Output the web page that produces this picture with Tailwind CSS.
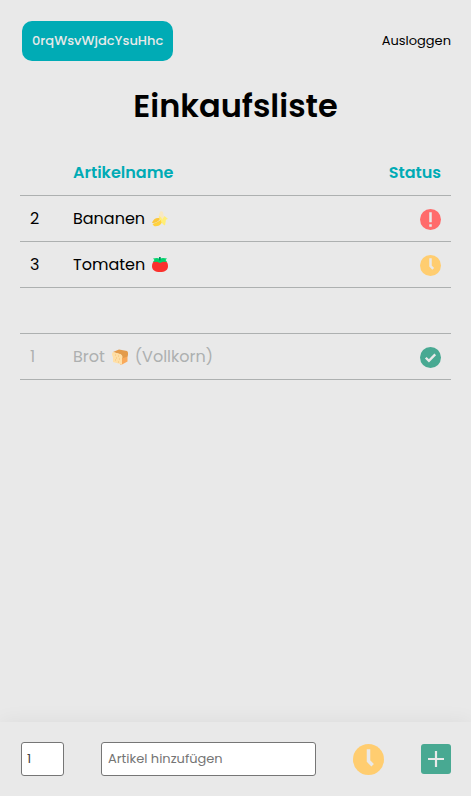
<!DOCTYPE html>
<html lang="de">

<head>
    <meta charset="UTF-8">
    <meta name="viewport" content="width=device-width, initial-scale=1.0">
    <script src="https://cdn.jsdelivr.net/npm/@tailwindcss/browser@4"></script>
    <title>Einkaufsliste</title>
</head>

<body class="min-h-screen flex flex-col bg-[#e9e9e9] text-black font-[Poppins,Inter,sans-serif]">
    <header class="flex items-center justify-between px-5 pt-[21px]">
        <button type="button" class="h-10 px-[10px] ml-[2px] rounded-[10px] bg-[#00abb5] text-[#e9e9e9] text-[13px] font-medium">0rqWsvWjdcYsuHhc</button>
        <a href="#" class="text-[13px]">Ausloggen</a>
    </header>

    <main class="flex-1 px-5">
        <h1 class="mt-5 text-center text-[32px] leading-[50px] font-semibold">Einkaufsliste</h1>

        <table class="w-full mt-[18px] border-collapse text-[16px]">
            <thead>
                <tr class="h-[46px] border-b border-[#adb0b0] text-[#00abb5]">
                    <th class="w-[43px]"></th>
                    <th class="px-[10px] pt-[2px] text-left font-semibold">Artikelname</th>
                    <th class="px-[10px] pt-[2px] text-right font-semibold">Status</th>
                </tr>
            </thead>
            <tbody>
                <tr class="h-[46px] border-b border-[#adb0b0]">
                    <td class="px-[10px] pt-[2px]">2</td>
                    <td class="px-[10px] pt-[2px]">
                        <div class="flex items-center gap-[7px]">
                            Bananen
                            <svg class="w-4 h-4" viewBox="0 0 16 16" role="img" aria-label="Banane">
                                <path d="M6.500 5 8 1l1-1 2 1 .8 5-1.800 4-3-2z" fill="#f9e8c0" />
                                <path d="M8 7.500C5 6 1 8 0 12c3 .5 6-1 8-4z" fill="#fcc73d" />
                                <path d="M9 8.500c-2 2-5 3-8.500 4.500L2 15c5 1 8-2 8.500-6z" fill="#ffd23e" />
                                <path d="M7 5c2 1 3 2 3 4l2.500-4c1 1 2.500 2 3.500 3-2 0-2.200 1-2.200 2l-.8 4.500c-2-1-3.500-2.500-4.500-5.500C7.500 8 7 7 7 5z" fill="#ffee76" />
                            </svg>
                        </div>
                    </td>
                    <td class="px-[10px] pt-[2px]">
                        <svg class="block ml-auto w-[21px] h-[21px]" viewBox="0 0 20 20" role="img" aria-label="Dringend">
                            <circle cx="10" cy="10" r="10" fill="#ff6b6b" />
                            <path d="M8.800 3h2.400v9.600H8.800zM8.800 14.600h2.400V17H8.800z" fill="#e9e9e9" />
                        </svg>
                    </td>
                </tr>
                <tr class="h-[46px] border-b border-[#adb0b0]">
                    <td class="px-[10px] pt-[2px]">3</td>
                    <td class="px-[10px] pt-[2px]">
                        <div class="flex items-center gap-[7px]">
                            Tomaten
                            <svg class="w-4 h-4" viewBox="0 0 16 16" role="img" aria-label="Tomate">
                                <path d="M3 3.500h10c2 1 3 3 3 5.500 0 4-3 6-8 6s-8-2-8-6c0-2.500 1-4.500 3-5.500z" fill="#fb312d" />
                                <path d="M1 1.500 5 1l2 .5V0h1.500v1.500L11 1l4 .5-1.500 1.500 1.500 2-4-.2L8 6 5 4.800 1 5l1.500-2z" fill="#00d26a" />
                                <path d="M7.200 0h1.300v3.500H7.200z" fill="#008463" />
                            </svg>
                        </div>
                    </td>
                    <td class="px-[10px] pt-[2px]">
                        <svg class="block ml-auto w-[21px] h-[21px]" viewBox="0 0 20 20" role="img" aria-label="Offen">
                            <circle cx="10" cy="10" r="10" fill="#ffcd70" />
                            <path d="M10 3.200v7.300l2.600 2.800" fill="none" stroke="#e9e9e9" stroke-width="2.400" />
                        </svg>
                    </td>
                </tr>
                <tr class="h-[46px] border-b border-[#adb0b0]">
                    <td colspan="3"></td>
                </tr>
                <tr class="h-[46px] border-b border-[#adb0b0] text-[#adb0b0]">
                    <td class="px-[10px] pt-[2px]">1</td>
                    <td class="px-[10px] pt-[2px]">
                        <div class="flex items-center gap-[7px]">
                            Brot
                            <svg class="w-4 h-4" viewBox="0 0 16 16" role="img" aria-label="Brot">
                                <path d="M9 7h6.500v5.500L10 15.500H8z" fill="#f9a95a" />
                                <path d="M1 3 7 .5 15 2c1.500 1 1.300 4 .5 5.500L10 9.500l-1-4z" fill="#e39b4b" />
                                <path d="M1 3 8 5c2.500 1 3 3 2 4.500v6L1 13V8C0 7-.5 4 1 3z" fill="#ffdfa6" />
                                <path d="M3 6h1M6 7h1M4 9h1M7 10h1M3 11h1M6 13h1" stroke="#efc27d" />
                            </svg>
                            (Vollkorn)
                        </div>
                    </td>
                    <td class="px-[10px] pt-[2px]">
                        <svg class="block ml-auto w-[21px] h-[21px]" viewBox="0 0 20 20" role="img" aria-label="Erledigt">
                            <circle cx="10" cy="10" r="10" fill="#48a992" />
                            <path d="m5.500 10.200 3 3 6-6.200" fill="none" stroke="#e9e9e9" stroke-width="2.200" />
                        </svg>
                    </td>
                </tr>
            </tbody>
        </table>
    </main>

    <form class="sticky bottom-0 flex items-center justify-between px-5 py-5 bg-[#e9e9e9] shadow-[0_0_20px_rgba(0,0,0,0.06)]">
        <input type="text" inputmode="numeric" name="anzahl" value="1" aria-label="Anzahl"
            class="w-1/10 h-[34px] px-[5px] ml-px border border-[#767676] rounded-[3px] bg-white text-[13px] text-[#444444]">
        <input type="text" name="artikel" placeholder="Artikel hinzufügen" aria-label="Artikel hinzufügen"
            class="w-1/2 h-[34px] px-[6px] border border-[#767676] rounded-[3px] bg-white text-[13px] placeholder:text-[#757575]">
        <button type="button" aria-label="Status wählen">
            <svg class="block w-[31px] h-[31px]" viewBox="0 0 30 30">
                <circle cx="15" cy="15" r="15" fill="#ffcd70" />
                <path d="M15 5v11.500l4 4" fill="none" stroke="#e9e9e9" stroke-width="3.400" />
            </svg>
        </button>
        <button type="submit" aria-label="Hinzufügen">
            <svg class="block w-[30px] h-[30px]" viewBox="0 0 30 30">
                <rect width="30" height="30" rx="3" fill="#48a992" />
                <path d="M15 7v16M7 15h16" stroke="#e9e9e9" stroke-width="2.200" />
            </svg>
        </button>
    </form>
</body>

</html>
